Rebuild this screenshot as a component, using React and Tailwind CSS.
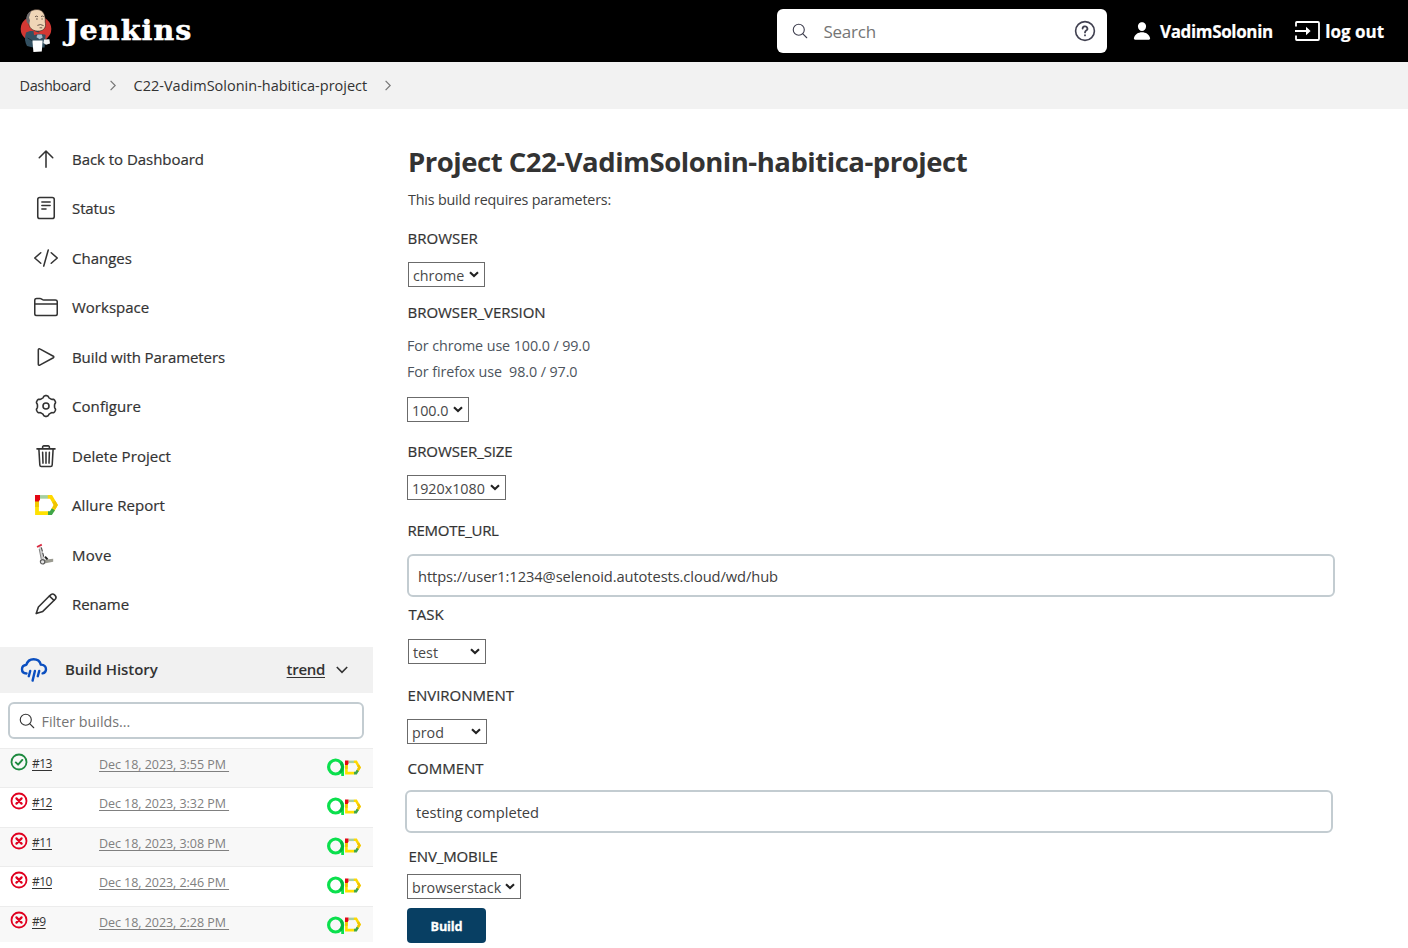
import React from 'react'
import { IoPerson } from 'react-icons/io5'

function Line({ children, className = 'h-6 w-6', width = 33, box = '0 0 512 512' }) {
  return (
    <svg viewBox={box} className={className} fill="none" stroke="currentColor" strokeWidth={width} strokeLinecap="round" strokeLinejoin="round">
      {children}
    </svg>
  )
}

function SearchIcon({ className }) {
  return (
    <Line className={className} width={32}>
      <path d="M221.09 64a157.09 157.09 0 10157.09 157.09A157.1 157.1 0 00221.09 64z" />
      <path d="M338.29 338.29L448 448" />
    </Line>
  )
}

// Six rounded lobes, the first one pointing straight up.
const gearPoints = Array.from({ length: 120 }, (_, i) => {
  const a = (i / 120) * Math.PI * 2
  const wave = Math.cos(6 * a)
  const r = 9.45 + 0.95 * Math.tanh(1.9 * wave)
  return `${(12 + r * Math.sin(a)).toFixed(2)},${(12 - r * Math.cos(a)).toFixed(2)}`
}).join(' ')

function AllureMark({ className }) {
  return (
    <svg viewBox="0 0 23 20" className={className}>
      <path d="M5 1.9H13" stroke="#a5cfa0" strokeWidth="3.6" fill="none" />
      <path d="M12.8 1.9H16L20.8 10L17.6 15.6" stroke="#ffd800" strokeWidth="3.6" fill="none" />
      <path d="M18.8 6.6L20.8 10L18.8 13.4" stroke="#f0c400" strokeWidth="3.6" fill="none" />
      <path d="M2 5V18.1H13.5" stroke="#ffe100" strokeWidth="3.8" fill="none" />
      <path d="M2 6V12" stroke="#efc800" strokeWidth="3.8" fill="none" />
      <path d="M13 18.1H15.9L18.4 14.2" stroke="#3fa648" strokeWidth="3.7" fill="none" />
      <path d="M0 0H5V4.2L3.9 6.5H0Z" fill="#e30613" />
    </svg>
  )
}

function AllureBadges() {
  return (
    <span className="flex items-center">
      <svg viewBox="0 0 18 18" className="h-[18px] w-[18px]" fill="none">
        <circle cx="8.6" cy="9" r="7" stroke="#0be04d" strokeWidth="3.2" />
        <path d="M15.6 9V18" stroke="#0be04d" strokeWidth="2.8" />
        <path d="M13.8 4.6A6.9 6.9 0 0 1 13 14.4" stroke="#05b53f" strokeWidth="3" />
      </svg>
      <AllureMark className="h-[15px] w-[16px]" />
    </span>
  )
}

const menu = [
  ['Back to Dashboard', 'tracking-[-0.04px]', <Line key="i"><path d="M112 230l144-144 144 144M256 96v336" /></Line>],
  ['Status', 'tracking-[-0.1px]', <Line key="i"><rect x="80" y="32" width="352" height="448" rx="44" /><path d="M168 128h176M168 202h176M168 276h88" /></Line>],
  ['Changes', '', <Line key="i"><path d="M144 368L16 256l128-112M368 368l128-112-128-112M304 84l-96 344" /></Line>],
  ['Workspace', '', <Line key="i"><path d="M456 438H56a40 40 0 01-40-40V114a40 40 0 0140-40h75.89a40 40 0 0122.19 6.72l27.84 18.56a40 40 0 0022.19 6.72H456a40 40 0 0140 40v252a40 40 0 01-40 40zM16 190h480" /></Line>],
  ['Build with Parameters', 'tracking-[-0.07px]', <Line key="i"><path d="M92 102v308c0 17.44 17 28.52 31 20.16l290-157.37c12.12-7.25 12.12-26.33 0-33.58L123 81.84c-14-8.36-31 2.72-31 20.16z" /></Line>],
  ['Configure', 'tracking-[0.07px]', <Line key="i" box="0 0 24 24" width={1.6}><polygon points={gearPoints} /><circle cx="12" cy="12" r="3" /></Line>],
  ['Delete Project', 'tracking-[0.06px]', <Line key="i"><path d="M104 104l20 344c.95 18.49 14.4 32 32 32h200c17.67 0 30.87-13.51 32-32l20-344M64 104h384M184 104V64a23.93 23.93 0 0124-24h96a23.93 23.93 0 0124 24v40M256 176v232M184 176l8 232M328 176l-8 232" /></Line>],
  ['Allure Report', 'tracking-[0.07px]', <AllureMark key="i" className="h-5 w-[23px]" />],
  ['Move', 'tracking-[0.3px]', (
    <svg key="i" viewBox="0 0 24 24" className="h-6 w-6" fill="none">
      <path d="M6.2 4L9 17" stroke="#cfcfcf" strokeWidth="3" />
      <path d="M7.4 4.5L9.8 14" stroke="#3c3c3c" strokeWidth="1" strokeDasharray="4 1.5" />
      <path d="M5.2 6L7.2 16" stroke="#6d6d6d" strokeWidth="0.8" />
      <path d="M3 4L7.8 1.6" stroke="#d9283f" strokeWidth="1.8" />
      <path d="M10 16.8L19.2 15.8V18.8L9 20.8Z" fill="#9b9b91" />
      <path d="M11 13.8l2.6 2.6" stroke="#222" strokeWidth="2" />
      <circle cx="8.6" cy="18.8" r="2.2" fill="#e4e4e4" stroke="#5c5c5c" strokeWidth="1.2" />
    </svg>
  )],
  ['Rename', 'tracking-[-0.09px]', (
    <Line key="i" box="0 0 24 24" width={1.6}>
      <path d="M15.6 3.8L4.4 15L2.2 21.6L8.8 19.4L20.2 8.2M15.4 4L20 8.4" />
      <path d="M15.6 3.8L17 2.6C19.4 0.8 23.2 4.4 21.6 6.8L20.2 8.2" />
    </Line>
  )],
]

const builds = [
  ['#13', 'Dec 18, 2023, 3:55 PM', true],
  ['#12', 'Dec 18, 2023, 3:32 PM', false],
  ['#11', 'Dec 18, 2023, 3:08 PM', false],
  ['#10', 'Dec 18, 2023, 2:46 PM', false],
  ['#9', 'Dec 18, 2023, 2:28 PM', false],
]

function StatusIcon({ ok }) {
  return (
    <svg viewBox="0 0 18 18" className={ok ? 'h-[18px] w-[18px] text-[#1e8a3f]' : 'h-[18px] w-[18px] text-[#e0001f]'} fill="none" stroke="currentColor" strokeLinecap="round" strokeLinejoin="round">
      <circle cx="9" cy="9" r="7.5" strokeWidth="1.8" />
      {ok ? <path d="M5.8 9.4l2.3 2.3 4.2-4.8" strokeWidth="1.9" /> : <path d="M6.4 6.4l5.2 5.2M11.6 6.4l-5.2 5.2" strokeWidth="2.2" />}
    </svg>
  )
}

function JenkinsLogo() {
  return (
    <svg viewBox="0 0 34 46" className="h-[46px] w-[34px]">
      <ellipse cx="17" cy="21" rx="15.3" ry="13.4" fill="#d33833" />
      <path d="M7 24.6Q4.6 32 8 38L14 39.6H25.6L26.6 27L19 23L11 23Z" fill="#335061" />
      <path d="M7.8 10C8.5 3.5 14 1.2 19 1.6C25 2.4 26.6 8 26.2 14C27.6 19 25 22.6 20.5 23C14.5 23.6 10.5 20.4 10 16.5Z" fill="#f0d6b7" stroke="#2a1c18" strokeWidth="0.6" />
      <path d="M12 3.6C8 5.5 6.2 10 8 14.5L10.2 16.4L11 12.5L10 9.5Z" fill="#6d6b6d" />
      <path d="M16 8.8q1.5-1.4 3 0M22 8.6q1.5-1.2 2.8 0M17 11h1.8M22.4 11h1.4M18.4 17.4q3-1.8 6.2.2M20.6 19.8h2.6" stroke="#4a3a32" strokeWidth="0.8" fill="none" />
      <path d="M14.5 22.8L19.5 24.4L24.8 22.4L25.4 26.4L20 25.8L15 27.2Z" fill="#d33833" />
      <path d="M18.5 26.4h4.2l1 3.2-3 1.6-3.2-2z" fill="#a9bccb" />
      <path d="M13.4 32.6H23.6L22.8 43.4L14.4 44Z" fill="#fff" />
      <path d="M25 31.6L30.4 31.2L31 35.4L27 36.8L24.4 35Z" fill="#f2f2f2" />
      <path d="M8.6 30L13.4 32.8" stroke="#1c2f3a" strokeWidth="1" />
    </svg>
  )
}

function Label({ children, className }) {
  return <div className={`flex h-5 items-center pb-[2px] pl-[0.6px] text-[15px] font-medium text-[#333] [-webkit-text-stroke:0.2px] ${className}`}>{children}</div>
}

function Select({ children, className }) {
  return (
    <div className={`flex h-[25px] items-center justify-between border border-[#6b6b6b] bg-white pr-[5px] pl-[4px] text-[14.3px] text-[#484848] ${className}`}>
      <span className="pt-[2px]">{children}</span>
      <svg viewBox="0 0 10 7" className="h-[7px] w-[10px]" fill="none" stroke="#222" strokeWidth="2.1">
        <path d="M1 1.2L5 5L9 1.2" />
      </svg>
    </div>
  )
}

function Crumb() {
  return (
    <svg viewBox="0 0 6 11" className="h-[11px] w-[6px]" fill="none" stroke="#777" strokeWidth="1.2">
      <path d="M0.6 0.8L5.2 5.5L0.6 10.2" />
    </svg>
  )
}

export default function App() {
  return (
    <div className="h-[948px] w-[1408px] overflow-hidden bg-white font-['Open_Sans',sans-serif] text-[#333]">
      <header className="flex h-[62px] items-center bg-black text-white">
        <div className="flex w-[777px] items-center pl-[19px]">
          <JenkinsLogo />
          <span className="ml-[12px] pb-[2px] font-['DejaVu_Serif',serif] text-[28.5px] leading-8 font-bold tracking-[1.1px] [-webkit-text-stroke:0.5px]">Jenkins</span>
        </div>
        <div className="flex h-11 w-[330px] items-center rounded-md bg-white pr-[11px] pl-[14px] text-[#404050]">
          <SearchIcon className="h-[18px] w-[18px]" />
          <span className="ml-[14.5px] grow pt-[2px] text-[17px] tracking-[-0.25px] text-[#757575]">Search</span>
          <Line className="h-[22px] w-[22px]" box="0 0 22 22" width={1.6}>
            <circle cx="11" cy="11" r="9.4" />
            <path d="M8.6 8.6a2.4 2.2 0 1 1 3.6 1.9c-.8.5-1.2.9-1.2 1.9M11 15.2v.2" strokeWidth="1.8" />
          </Line>
        </div>
        <IoPerson className="ml-[25px] h-[20px] w-[20px]" />
        <span className="ml-[8px] pt-[2px] text-[17px] font-bold tracking-[-0.36px] [-webkit-text-stroke:0.2px]">VadimSolonin</span>
        <svg viewBox="0 0 26 22" className="ml-[21px] h-[22px] w-[26px]" fill="none" stroke="#fff" strokeWidth="1.8">
          <path d="M2 6.6V2.8Q2 2 2.8 2H24Q25 2 25 3V19Q25 20 24 20H2.8Q2 20 2 19.2V15.4M1 11H14" />
          <path d="M12 6.8L16.6 11L12 15.2Z" fill="#fff" stroke="none" />
        </svg>
        <span className="ml-[5.5px] pt-[2px] text-[17px] font-bold whitespace-nowrap [-webkit-text-stroke:0.2px]">log out</span>
      </header>

      <nav className="flex h-[47px] items-center bg-[#f2f2f2] pl-[19.6px] text-[14.5px]">
        <span className="w-[90px] tracking-[-0.4px]">Dashboard</span>
        <Crumb />
        <span className="ml-[18px] w-[251px]">C22-VadimSolonin-habitica-project</span>
        <Crumb />
      </nav>

      <div className="flex">
        <aside className="w-[373px] shrink-0 pt-[25px]">
          <ul>
            {menu.map(([label, tracking, icon]) => (
              <li key={label} className="flex h-[49.5px] items-center pl-[34px]">
                <span className="flex w-6 justify-center">{icon}</span>
                <span className={`ml-[14px] text-[15px] font-medium [-webkit-text-stroke:0.2px] ${tracking}`}>{label}</span>
              </li>
            ))}
          </ul>
          <div className="mt-[18px] flex h-[46px] items-center bg-[#f1f1f1] pr-[25px] pl-[20px] text-[15px] font-semibold">
            <Line className="h-[26px] w-[28px] text-[#0b4fc0]" box="0 0 28 26" width={2.4}>
              <path d="M6.5 16.5C3.6 16.3 2 14.6 2 12.2C2 9.8 3.6 8.2 6.4 7.8C7.4 4.2 10 2.2 13.6 2.2C17.4 2.2 20 4.4 20.8 7.6C24.2 7.8 26 9.6 26 12.2C26 14.4 24.6 16 22.6 16.4" />
              <path d="M10.2 14L8.8 19.2M14.9 14L12.6 23.6M19.2 14L17.8 19.2" />
            </Line>
            <span className="ml-[17px] grow pb-[2px] tracking-[-0.05px]">Build History</span>
            <span className="pb-[2px] tracking-[-0.3px] underline underline-offset-2">trend</span>
            <svg viewBox="0 0 12 8" className="ml-[11px] h-[8px] w-[12px]" fill="none" stroke="#333" strokeWidth="1.6">
              <path d="M0.8 1L6 6.4L11.2 1" />
            </svg>
          </div>
          <div className="mt-[9px] ml-[8px] flex h-[37px] w-[356px] items-center rounded-md border-2 border-[#c3ccd1] pl-[8px] text-[14.3px] text-[#757575]">
            <SearchIcon className="h-[18px] w-[18px] text-[#333]" />
            <span className="ml-[5.5px] pt-[2px]">Filter builds...</span>
          </div>
          <ul className="mt-[9px] h-[194px] overflow-hidden">
            {builds.map(([id, date, ok], i) => (
              <li key={id} className={`flex h-[39.4px] items-start border-t border-[#ececec] pl-[10px] ${i % 2 ? 'bg-white' : 'bg-[#f8f8f8]'}`}>
                <span className="pt-[4px]"><StatusIcon ok={ok} /></span>
                <a className="ml-[4px] w-[67px] pt-[6px] text-[12px] leading-[18px] tracking-[-0.5px] text-[#333]"><span className="underline underline-offset-2">{id}</span></a>
                <span className="w-[228px] pt-[7px] text-[12.5px] leading-[18px] tracking-[-0.05px] text-[#808080]"><span className="whitespace-pre underline underline-offset-2">{date + ' '}</span></span>
                <span className="pt-[9px]"><AllureBadges /></span>
              </li>
            ))}
          </ul>
        </aside>

        <main className="flex flex-col items-start pt-[33px] pl-[34px]">
          <h1 className="ml-px flex h-10 items-center text-[27.5px] font-bold tracking-[-0.48px] whitespace-nowrap">Project C22-VadimSolonin-habitica-project</h1>
          <p className="mt-2 ml-px flex h-5 items-center text-[14.3px] tracking-[-0.18px] text-[#404040]">This build requires parameters:</p>
          <Label className="mt-[19px]">BROWSER</Label>
          <Select className="mt-[13px] ml-px w-[77px]">chrome</Select>
          <Label className="mt-4 tracking-[-0.05px]">BROWSER_VERSION</Label>
          <p className="mt-[13px] flex h-5 items-center text-[14.3px] tracking-[-0.08px] text-[#4d545d]">For chrome use 100.0 / 99.0</p>
          <p className="mt-[6px] flex h-5 items-center text-[14.3px] tracking-[-0.08px] whitespace-pre text-[#4d545d]">{'For firefox use  98.0 / 97.0'}</p>
          <Select className="mt-[15px] w-[62px]">100.0</Select>
          <Label className="mt-5 tracking-[-0.1px]">BROWSER_SIZE</Label>
          <Select className="mt-[13px] w-[99px]">1920x1080</Select>
          <Label className="mt-[21px] tracking-[-0.29px]">REMOTE_URL</Label>
          <input className="mt-[13px] h-[43px] w-[928px] rounded-md border-2 border-[#c3ccd1] px-[9px] text-[14.7px] tracking-[-0.09px] text-[#404040] outline-none" defaultValue="https://user1:1234@selenoid.autotests.cloud/wd/hub" />
          <Label className="mt-2 ml-px">TASK</Label>
          <Select className="mt-[14px] ml-px w-[78px]">test</Select>
          <Label className="mt-[22px]">ENVIRONMENT</Label>
          <Select className="mt-[13px] w-[80px]">prod</Select>
          <Label className="mt-[15px]">COMMENT</Label>
          <input className="mt-[11px] -ml-[2px] h-[43px] w-[928px] rounded-md border-2 border-[#c3ccd1] px-[9px] text-[14.7px] text-[#404040] outline-none" defaultValue="testing completed" />
          <Label className="mt-[14px] ml-px tracking-[-0.13px]">ENV_MOBILE</Label>
          <Select className="mt-[7px] w-[114px]">browserstack</Select>
          <button className="mt-[9px] h-[35px] w-[79px] rounded bg-[#083f63] pt-[2px] text-[12.7px] font-bold tracking-[-0.15px] text-white [-webkit-text-stroke:0.3px]">Build</button>
        </main>
      </div>
    </div>
  )
}
